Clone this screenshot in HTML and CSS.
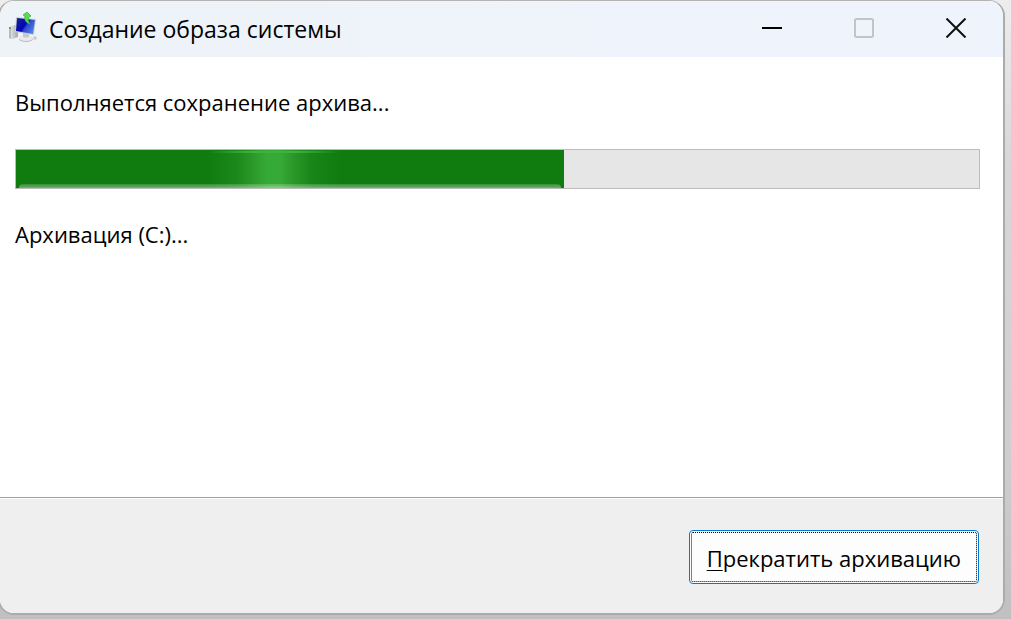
FILE: index.html
```html
<!DOCTYPE html>
<html lang="ru">
<head>
	<meta charset="UTF-8">
	<meta name="viewport" content="width=device-width, initial-scale=1">
	<title>Создание образа системы</title>
	<link rel="stylesheet" href="styles.css">
</head>
<body>
	<div class="window">
		<header class="titlebar">
			<svg class="app-icon" viewBox="0 -1 30 34" aria-hidden="true">
				<defs>
					<linearGradient id="screen" x1="0" y1="0.2" x2="1" y2="0.8">
						<stop offset="0" stop-color="#1420a0"/>
						<stop offset="0.45" stop-color="#0404b4"/>
						<stop offset="0.55" stop-color="#2b49d0"/>
						<stop offset="1" stop-color="#5a86ea"/>
					</linearGradient>
					<linearGradient id="tower" x1="0" y1="0" x2="1" y2="0">
						<stop offset="0" stop-color="#efefef"/>
						<stop offset="1" stop-color="#a4a7ab"/>
					</linearGradient>
				</defs>
				<path d="M1 14l6-2 3 1v11l-6 2-3-1z" fill="url(#tower)"/>
				<path d="M1 14l2 1v11l-2-1z" fill="#b9bbbd"/>
				<path d="M1 14h2v2H1z" fill="#62a850"/>
				<ellipse cx="18" cy="26" rx="7" ry="3" fill="#b9bbbe"/>
				<ellipse cx="18" cy="25" rx="7" ry="3" fill="#e9eaec"/>
				<path d="M15 20h6v4q-3 1-6 0z" fill="#c6c8cb"/>
				<path d="M8 4l20 2-2 16-19-3z" fill="#cdd1d6"/>
				<path d="M9 5l18 2-2 14-17-3z" fill="url(#screen)"/>
				<path d="M26 23l3 1-1 3-3-1z" fill="#c9cbce"/>
				<path d="M19-1l-4 3 2 1c-1 4 1 7 5 8-2-3-2-5-1-7l2-1z" fill="#58dc50" stroke="#35b03a" stroke-width="0.7"/>
			</svg>
			<h1 class="title">Создание образа системы</h1>
			<div class="controls">
				<button type="button" class="control" aria-label="Свернуть">
					<svg viewBox="0 0 20 20"><path d="M0 10h20" stroke="#000" stroke-width="2"/></svg>
				</button>
				<button type="button" class="control" aria-label="Развернуть" disabled>
					<svg viewBox="0 0 20 20"><rect x="1" y="1" width="18" height="18" rx="1.5" fill="none" stroke="#c2c4ca" stroke-width="2"/></svg>
				</button>
				<button type="button" class="control" aria-label="Закрыть">
					<svg viewBox="0 0 20 20"><path d="M.5.5l19 19M19.5.5l-19 19" stroke="#111" stroke-width="2"/></svg>
				</button>
			</div>
		</header>
		<main class="content">
			<p id="status">Выполняется сохранение архива...</p>
			<div class="progress" role="progressbar" aria-labelledby="status" aria-valuemin="0" aria-valuemax="100" aria-valuenow="57">
				<div class="progress-fill" style="width: 56.9%">
					<div class="progress-shine"></div>
				</div>
			</div>
			<p>Архивация (C:)...</p>
		</main>
		<footer class="footer">
			<button type="button" class="stop" accesskey="П"><u>П</u>рекратить архивацию</button>
		</footer>
	</div>
</body>
</html>
```
FILE: styles.css
```css
* {
	margin: 0;
	padding: 0;
	box-sizing: border-box;
}
body {
	display: flex;
	min-height: 100vh;
	padding: 0 6px 4px 0;
	overflow-x: hidden;
	background: linear-gradient(#ededed, #d8d8d8 25%, #cecece 75%, #c0c0c0);
	color: #000;
	font-family: "Segoe UI", "Open Sans", "Noto Sans", sans-serif;
	font-size: 22px;
	line-height: 30px;
}
button {
	border: none;
	background: none;
	font: inherit;
	color: inherit;
}

/* the left edge of the window is just off the screen */
.window {
	flex: 1;
	display: flex;
	flex-direction: column;
	margin-left: -2px;
	border: 2px solid #ababab;
	border-top: 1px solid #b4b4b4;
	border-radius: 16px;
	background: #fff;
	overflow: hidden;
}

/* title bar */
.titlebar {
	display: flex;
	align-items: center;
	height: 56px;
	padding-left: 8px;
	background: linear-gradient(90deg, #edf3f7, #eff3fb 60%);
}
.app-icon {
	width: 30px;
	height: 34px;
}
.title {
	flex: 1;
	margin-left: 11px;
	font-size: 23px;
	font-weight: normal;
}
.controls {
	display: flex;
	align-self: stretch;
	padding-right: 1px;
}
.control {
	display: flex;
	align-items: center;
	justify-content: center;
	width: 92px;
	padding-bottom: 2px;
}
.control svg {
	display: block;
	width: 20px;
	height: 20px;
}

/* content */
.content {
	flex: 1;
	padding: 30px 23px 30px 15px;
}
.progress {
	height: 40px;
	margin: 32px 0 30px;
	border: 1px solid #bcbcbc;
	background: #e6e6e6;
}
.progress-fill {
	position: relative;
	height: 100%;
	background: #107c10;
	overflow: hidden;
}
.progress-fill::after {
	content: "";
	position: absolute;
	left: 3px;
	right: 3px;
	bottom: 0;
	height: 4px;
	border-radius: 8px 8px 0 0;
	background: linear-gradient(rgba(255, 255, 255, 0.15), rgba(255, 255, 255, 0.4));
}
.progress-shine {
	width: 132px;
	height: 100%;
	margin-left: 35%;
	background:
		linear-gradient(90deg, transparent, #3eb23e 35%, #3eb23e 65%, transparent) 0 1px / 100% 2px no-repeat,
		linear-gradient(90deg, transparent, rgba(56, 172, 56, 0.25) 22%, #2f9f2f 38%, #36aa36 45%, #36aa36 55%, #2a992a 64%, rgba(56, 172, 56, 0.2) 78%, transparent);
}

/* footer */
.footer {
	display: flex;
	justify-content: flex-end;
	padding: 32px 24px 29px;
	border-top: 1px solid #a0a0a0;
	box-shadow: inset 0 1px #fff;
	background: #efefef;
}
.stop {
	padding: 12px 17px 10px;
	border: 1px solid #0078d4;
	border-radius: 4px;
	background: #fdfdfd;
	outline: 1px dotted #000;
	outline-offset: -3px;
}
.stop u {
	text-decoration-thickness: 1px;
	text-underline-offset: 3px;
}
```
